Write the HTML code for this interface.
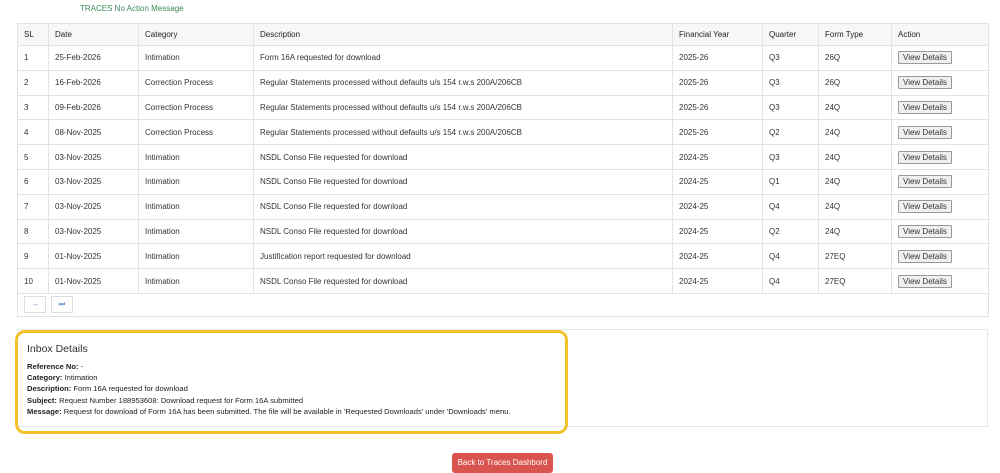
<!DOCTYPE html>
<html><head><style>
body{margin:0;width:1000px;height:473px;background:#fff;font-family:"Liberation Sans",sans-serif;font-size:8px;color:#333;position:relative;overflow:hidden}
.t{position:absolute;left:80px;top:4px;color:#3c8a5a;font-size:8px}
table{position:absolute;left:17px;top:23px;border-collapse:collapse;width:971px;table-layout:fixed}
td,th{border:1px solid #e3e3e3;padding:0 0 0 6px;text-align:left;font-weight:normal;height:23.8px;white-space:nowrap;overflow:hidden}
th{background:#f7f7f7;height:21px;color:#222}
.b{display:inline-block;border:1px solid #999;background:#f0f0f0;padding:1px 4px;font-size:8px;color:#333;border-radius:1px}
.pg{display:inline-block;width:20px;height:15px;border:1px solid #ddd;margin-right:5px;text-align:center;line-height:15px;color:#3a7bc8;font-size:7px}
.panel{position:absolute;left:17px;top:329px;width:969px;height:96px;border:1px solid #dfeaef}
.y{position:absolute;left:15px;top:330px;width:547px;height:98px;border:3px solid #f3c22a;border-radius:10px}
.inb{position:absolute;left:27px;top:343px;font-size:10.5px;color:#333}
.ln{position:absolute;left:27px;font-size:7.6px;color:#222}
.ln b{font-weight:bold}
.btn{position:absolute;left:452px;top:453px;width:101px;height:20px;background:#d9534f;color:#fff;border-radius:3px;text-align:center;line-height:20px;font-size:8px}
</style></head><body>
<div class="t">TRACES No Action Message</div>
<table>
<colgroup><col style="width:31px"><col style="width:90px"><col style="width:115px"><col style="width:419px"><col style="width:90px"><col style="width:56px"><col style="width:73px"><col style="width:97px"></colgroup>
<tr><th>SL</th><th>Date</th><th>Category</th><th>Description</th><th>Financial Year</th><th>Quarter</th><th>Form Type</th><th>Action</th></tr>
<tr><td>1</td><td>25-Feb-2026</td><td>Intimation</td><td>Form 16A requested for download</td><td>2025-26</td><td>Q3</td><td>26Q</td><td><span class="b">View Details</span></td></tr>
<tr><td>2</td><td>16-Feb-2026</td><td>Correction Process</td><td>Regular Statements processed without defaults u/s 154 r.w.s 200A/206CB</td><td>2025-26</td><td>Q3</td><td>26Q</td><td><span class="b">View Details</span></td></tr>
<tr><td>3</td><td>09-Feb-2026</td><td>Correction Process</td><td>Regular Statements processed without defaults u/s 154 r.w.s 200A/206CB</td><td>2025-26</td><td>Q3</td><td>24Q</td><td><span class="b">View Details</span></td></tr>
<tr><td>4</td><td>08-Nov-2025</td><td>Correction Process</td><td>Regular Statements processed without defaults u/s 154 r.w.s 200A/206CB</td><td>2025-26</td><td>Q2</td><td>24Q</td><td><span class="b">View Details</span></td></tr>
<tr><td>5</td><td>03-Nov-2025</td><td>Intimation</td><td>NSDL Conso File requested for download</td><td>2024-25</td><td>Q3</td><td>24Q</td><td><span class="b">View Details</span></td></tr>
<tr><td>6</td><td>03-Nov-2025</td><td>Intimation</td><td>NSDL Conso File requested for download</td><td>2024-25</td><td>Q1</td><td>24Q</td><td><span class="b">View Details</span></td></tr>
<tr><td>7</td><td>03-Nov-2025</td><td>Intimation</td><td>NSDL Conso File requested for download</td><td>2024-25</td><td>Q4</td><td>24Q</td><td><span class="b">View Details</span></td></tr>
<tr><td>8</td><td>03-Nov-2025</td><td>Intimation</td><td>NSDL Conso File requested for download</td><td>2024-25</td><td>Q2</td><td>24Q</td><td><span class="b">View Details</span></td></tr>
<tr><td>9</td><td>01-Nov-2025</td><td>Intimation</td><td>Justification report requested for download</td><td>2024-25</td><td>Q4</td><td>27EQ</td><td><span class="b">View Details</span></td></tr>
<tr><td>10</td><td>01-Nov-2025</td><td>Intimation</td><td>NSDL Conso File requested for download</td><td>2024-25</td><td>Q4</td><td>27EQ</td><td><span class="b">View Details</span></td></tr>
<tr><td colspan="8" style="height:22px"><span class="pg">&rarr;</span><span class="pg">&#9197;</span></td></tr>
</table>
<div class="panel"></div>
<div class="y"></div>
<div class="inb">Inbox Details</div>
<div class="ln" style="top:362px"><b>Reference No:</b> -</div>
<div class="ln" style="top:373px"><b>Category:</b> Intimation</div>
<div class="ln" style="top:384px"><b>Description:</b> Form 16A requested for download</div>
<div class="ln" style="top:396px"><b>Subject:</b> Request Number 188953608: Download request for Form 16A submitted</div>
<div class="ln" style="top:407px"><b>Message:</b> Request for download of Form 16A has been submitted. The file will be available in 'Requested Downloads' under 'Downloads' menu.</div>
<div class="btn">Back to Traces Dashbord</div>
</body></html>
